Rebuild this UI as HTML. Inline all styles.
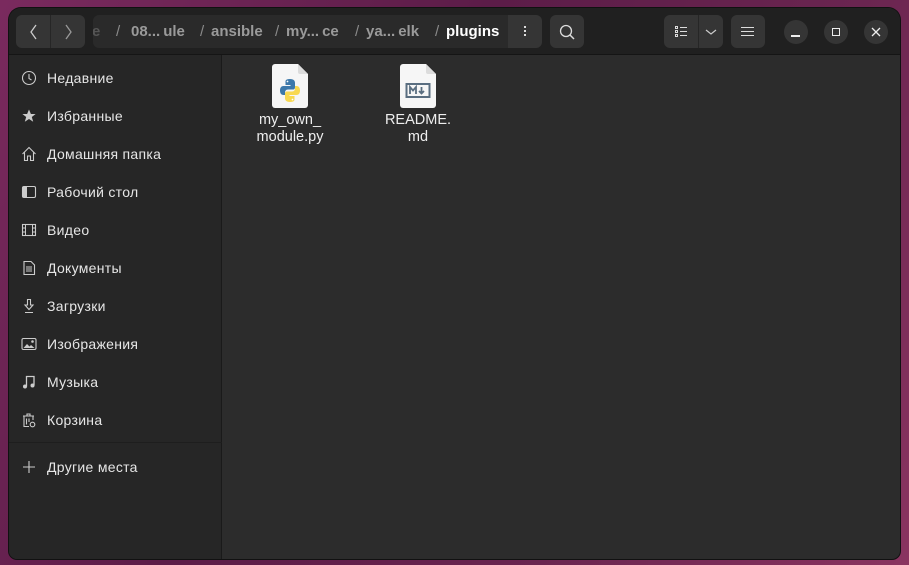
<!DOCTYPE html>
<html><head><meta charset="utf-8"><style>
*{margin:0;padding:0;box-sizing:border-box}
html,body{width:909px;height:565px;overflow:hidden}
body{background:linear-gradient(120deg,#7a2a5e 0%,#5c1c48 40%,#6a2550 70%,#8a3460 100%);font-family:"Liberation Sans","DejaVu Sans",sans-serif;position:relative}
.win{position:absolute;left:9px;top:8px;width:891px;height:551px;border-radius:12px 12px 8px 8px;overflow:hidden;background:#2c2c2c;box-shadow:0 0 0 1px #111}
.hdr{position:absolute;left:0;top:0;width:891px;height:47px;background:#202020;border-bottom:1px solid #151515}
.btn{position:absolute;top:7px;height:33px;background:#353535;border-radius:6px}
.side{position:absolute;left:0;top:47px;width:213px;height:504px;background:#262626;border-right:1px solid #1a1a1a}
.it{position:absolute;left:38px;color:#e6e6e6;font-size:14px;line-height:16px;letter-spacing:0.3px}
.ic{position:absolute;left:12px}
.path{position:absolute;left:84px;top:7px;width:415px;height:33px;background:#2a2a2a;border-radius:6px 0 0 6px;color:#9a9a9a;font-weight:bold;font-size:15px;line-height:33px;white-space:nowrap;overflow:hidden}
.path span{position:absolute;top:0}
.path .s{font-weight:normal;color:#8a8a8a}
.circ{position:absolute;top:12px;width:24px;height:24px;border-radius:12px;background:#353535}
.lbl{position:absolute;color:#eee;font-size:14.5px;line-height:17px;text-align:center;width:100px}
</style></head><body>
<div class="win">
<div class="hdr">
 <div class="btn" style="left:7px;width:69px"></div>
 <div style="position:absolute;left:41px;top:7px;width:1px;height:33px;background:#262626"></div>
 <svg style="position:absolute;left:18px;top:15px" width="14" height="18"><path d="M9 2L4 9L9 16" stroke="#ccc" stroke-width="1.3" fill="none"/></svg>
 <svg style="position:absolute;left:52px;top:15px" width="14" height="18"><path d="M5 2L10 9L5 16" stroke="#999" stroke-width="1.3" fill="none"/></svg>
 <div class="path">
  <span style="left:-1px;color:#555">e</span>
  <span class="s" style="left:23px">/</span>
  <span style="left:38px">08...&thinsp;ule</span>
  <span class="s" style="left:107px">/</span>
  <span style="left:118px">ansible</span>
  <span class="s" style="left:182px">/</span>
  <span style="left:193px">my...&thinsp;ce</span>
  <span class="s" style="left:262px">/</span>
  <span style="left:273px">ya...&thinsp;elk</span>
  <span class="s" style="left:342px">/</span>
  <span style="left:353px;color:#fff">plugins</span>
 </div>
 <div class="btn" style="left:499px;width:34px;border-radius:0 6px 6px 0"></div>
 <div style="position:absolute;left:515px;top:18px;width:2px;height:2px;background:#ddd;box-shadow:0 4px #ddd,0 8px #ddd"></div>
 <div class="btn" style="left:541px;width:34px"></div>
 <svg style="position:absolute;left:549px;top:15px" width="18" height="18"><circle cx="8" cy="8" r="5.5" stroke="#ddd" stroke-width="1.3" fill="none"/><path d="M12 12L16 16" stroke="#ddd" stroke-width="1.5"/></svg>
 <div class="btn" style="left:655px;width:59px"></div>
 <div style="position:absolute;left:689px;top:7px;width:1px;height:33px;background:#262626"></div>
 <svg style="position:absolute;left:665px;top:17px" width="16" height="14"><g fill="none" stroke="#ddd" stroke-width="1"><rect x="1.5" y="1.5" width="2" height="2"/><rect x="1.5" y="5.5" width="2" height="2"/><rect x="1.5" y="9.5" width="2" height="2"/></g><path d="M6 2.5H13M6 6.5H13M6 10.5H13" stroke="#ddd" stroke-width="1"/></svg>
 <svg style="position:absolute;left:696px;top:20px" width="12" height="8"><path d="M1 2L6 6L11 2" stroke="#ccc" stroke-width="1.2" fill="none"/></svg>
 <div class="btn" style="left:722px;width:34px"></div>
 <svg style="position:absolute;left:731px;top:17px" width="16" height="14"><path d="M1 2.5H14M1 6.5H14M1 10.5H14" stroke="#ddd" stroke-width="1.1"/></svg>
 <div class="circ" style="left:775px"></div><div style="position:absolute;left:782px;top:27px;width:9px;height:1.5px;background:#eee"></div>
 <div class="circ" style="left:815px"></div><div style="position:absolute;left:823px;top:20px;width:8px;height:8px;border:1.3px solid #eee"></div>
 <div class="circ" style="left:855px"></div><svg style="position:absolute;left:862px;top:19px" width="10" height="10"><path d="M1 1L9 9M9 1L1 9" stroke="#eee" stroke-width="1.3"/></svg>
</div>
<div class="side">
 <svg class="ic" style="top:15px" width="16" height="16"><circle cx="8" cy="8" r="6.5" stroke="#ccc" fill="none" stroke-width="1.1"/><path d="M8 4V8.5L10.5 10" stroke="#ccc" fill="none" stroke-width="1.1"/></svg><div class="it" style="top:15px">Недавние</div>
 <svg class="ic" style="top:53px" width="16" height="16"><path d="M8 1.5L9.9 6H14.6L10.8 9L12.2 13.8L8 11L3.8 13.8L5.2 9L1.4 6H6.1Z" fill="#ccc"/></svg><div class="it" style="top:53px">Избранные</div>
 <svg class="ic" style="top:91px" width="16" height="16"><path d="M1.5 8L8 1.5L14.5 8M3.5 6.5V14.5H6.5V10H9.5V14.5H12.5V6.5" stroke="#ccc" fill="none" stroke-width="1.1"/></svg><div class="it" style="top:91px">Домашняя папка</div>
 <svg class="ic" style="top:129px" width="16" height="16"><rect x="1.5" y="2.5" width="13" height="11" rx="1.5" stroke="#ccc" fill="none" stroke-width="1.1"/><rect x="2" y="3" width="4" height="10" fill="#ccc"/></svg><div class="it" style="top:129px">Рабочий стол</div>
 <svg class="ic" style="top:167px" width="16" height="16"><rect x="1.5" y="2.5" width="13" height="11" stroke="#ccc" fill="none" stroke-width="1.1"/><path d="M4.5 2.5V13.5M11.5 2.5V13.5M1.5 6H4.5M1.5 10H4.5M11.5 6H14.5M11.5 10H14.5" stroke="#ccc" stroke-width="1"/></svg><div class="it" style="top:167px">Видео</div>
 <svg class="ic" style="top:205px" width="16" height="16"><path d="M3 1.5H10L13.5 5V14.5H3Z" stroke="#ccc" fill="none" stroke-width="1.1"/><path d="M5 7H11M5 9H11M5 11H11" stroke="#ccc" stroke-width="1"/></svg><div class="it" style="top:205px">Документы</div>
 <svg class="ic" style="top:243px" width="16" height="16"><path d="M6.5 1.5V7H4L8 11.5L12 7H9.5V1.5ZM4 14.5H12" stroke="#ccc" fill="none" stroke-width="1.1"/></svg><div class="it" style="top:243px">Загрузки</div>
 <svg class="ic" style="top:281px" width="16" height="16"><rect x="1" y="2.5" width="14" height="11" rx="1.5" stroke="#ccc" fill="none" stroke-width="1.1"/><path d="M2.5 12L6 8L8.5 10.5L10 9L13.5 12Z" fill="#ccc"/><circle cx="11.5" cy="5.5" r="1.3" fill="#ccc"/></svg><div class="it" style="top:281px">Изображения</div>
 <svg class="ic" style="top:319px" width="16" height="16"><path d="M5.5 12.5V2.5H13V11.5" stroke="#ccc" fill="none" stroke-width="1.3"/><circle cx="4" cy="12.5" r="2" fill="#ccc"/><circle cx="11.5" cy="11.5" r="2" fill="#ccc"/></svg><div class="it" style="top:319px">Музыка</div>
 <svg class="ic" style="top:357px" width="16" height="16"><path d="M2 4H13M6 4V2H9V4M3 4.5V14.5H8M12 4.5V8M5.5 6.5V12.5M8 6.5V10" stroke="#ccc" fill="none" stroke-width="1.1"/><circle cx="11.5" cy="12.5" r="2.3" stroke="#ccc" fill="none" stroke-width="1.1"/></svg><div class="it" style="top:357px">Корзина</div>
 <div style="position:absolute;left:0;top:387px;width:213px;height:1px;background:#1e1e1e"></div>
 <svg class="ic" style="top:404px" width="16" height="16"><path d="M8 2V14M2 8H14" stroke="#ccc" stroke-width="1.1"/></svg><div class="it" style="top:404px">Другие места</div>
</div>
<svg style="position:absolute;left:263px;top:56px" width="36" height="44"><path d="M3 0H26L36 10V41A3 3 0 0 1 33 44H3A3 3 0 0 1 0 41V3A3 3 0 0 1 3 0Z" fill="#f6f6f6"/><path d="M26 0V8A2 2 0 0 0 28 10H36Z" fill="#dcdcdc"/>
<path d="M18 15C13 15 13.5 17 13.5 19V21H18.5V22H11.5C9 22 8 24 8 26.5C8 29 9 31 11.5 31H13V28.5C13 27 14 25.5 16 25.5H21C22.5 25.5 23 24.5 23 23V19C23 17 22 15 18 15Z" fill="#3c78aa"/><circle cx="15.5" cy="17.5" r="0.9" fill="#fff"/>
<path d="M18 38C23 38 22.5 36 22.5 34V32H17.5V31H24.5C27 31 28 29 28 26.5C28 24 27 22 24.5 22H23V24.5C23 26 22 27.5 20 27.5H15C13.5 27.5 13 28.5 13 30V34C13 36 14 38 18 38Z" fill="#f8d850"/><circle cx="20.5" cy="35.5" r="0.9" fill="#fff"/></svg>
<div class="lbl" style="left:231px;top:104px">my_own_<br>module.py</div>
<svg style="position:absolute;left:391px;top:56px" width="36" height="44"><path d="M3 0H26L36 10V41A3 3 0 0 1 33 44H3A3 3 0 0 1 0 41V3A3 3 0 0 1 3 0Z" fill="#f6f6f6"/><path d="M26 0V8A2 2 0 0 0 28 10H36Z" fill="#dcdcdc"/>
<rect x="6.5" y="20" width="23" height="13" stroke="#5a6e80" stroke-width="2" fill="none"/><path d="M10 30V23L13 26.5L16 23V30M21.5 23V29.5M19 27L21.5 29.5L24 27" stroke="#5a6e80" stroke-width="1.8" fill="none"/></svg>
<div class="lbl" style="left:359px;top:104px">README.<br>md</div>
</div>
</body></html>
